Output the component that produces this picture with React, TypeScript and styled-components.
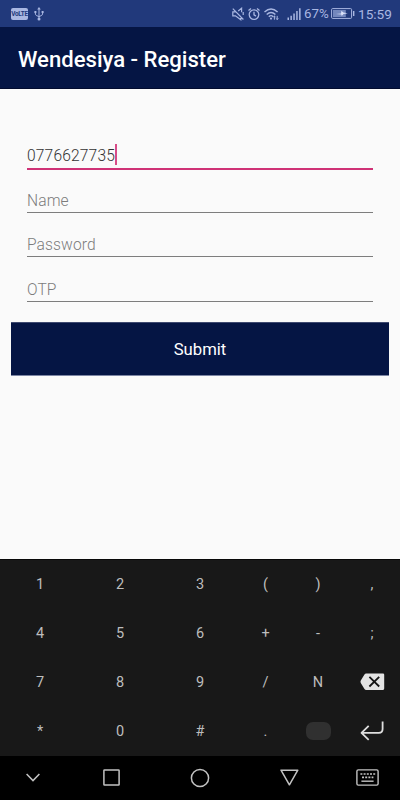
import React from "react";
import styled, { createGlobalStyle } from "styled-components";

const GlobalStyle = createGlobalStyle`
  *, *::before, *::after { box-sizing: border-box; }
  body { margin: 0; background: #fafafa; font-family: Roboto, "Noto Sans", sans-serif; }
  svg { display: block; flex: none; }
`;

const Screen = styled.div`
  display: flex;
  flex-direction: column;
  width: 400px;
  height: 800px;
  overflow: hidden;
  background: #fafafa;
`;

const StatusBar = styled.header`
  display: flex;
  align-items: center;
  justify-content: space-between;
  height: 27px;
  padding: 0 8px 0 11px;
  background: #21397b;
  color: #a9b7e2;
`;

const StatusGroup = styled.div<{ $gap?: number }>`
  display: flex;
  align-items: center;
  gap: ${({ $gap = 0 }) => $gap}px;
`;

const VolteBadge = styled.span`
  display: flex;
  align-items: center;
  justify-content: center;
  width: 17px;
  height: 12px;
  border-radius: 2px;
  background: #a9b7e2;
  color: #21397b;
  font-size: 6.4px;
  font-weight: 700;
  letter-spacing: -0.3px;
  line-height: 12px;
`;

const StatusText = styled.span<{ $width: number; $size: number }>`
  width: ${({ $width }) => $width}px;
  font-size: ${({ $size }) => $size}px;
  line-height: 26px;
  padding-top: 1px;
  white-space: nowrap;
`;

const SignalSlot = styled.span`
  padding-left: 8px;
`;

const AppBar = styled.div`
  display: flex;
  align-items: center;
  height: 62px;
  padding: 2px 18px 0;
  background: #051544;
  border-bottom: 1px solid #020b2e;
`;

const Title = styled.h1`
  margin: 0;
  color: #fff;
  font-size: 22.1px;
  font-weight: 500;
  line-height: 28px;
  white-space: nowrap;
`;

const Form = styled.main`
  flex: 1;
  display: flex;
  flex-direction: column;
  padding: 48px 11px 0;
`;

const Field = styled.div<{ $active?: boolean; $height: number }>`
  display: flex;
  align-items: flex-end;
  height: ${({ $height }) => $height}px;
  margin: 0 16px;
  padding-bottom: ${({ $active }) => ($active ? 2 : 1)}px;
  border-bottom: ${({ $active }) => ($active ? "2px solid #cf3276" : "1px solid #7d7d7d")};
`;

const FieldText = styled.span<{ $filled?: boolean }>`
  color: ${({ $filled }) => ($filled ? "#333" : "#7c7c7c")};
  font-size: 15.6px;
  font-weight: 300;
  letter-spacing: ${({ $filled }) => ($filled ? 0.15 : 0.1)}px;
  line-height: 20px;
`;

const Caret = styled.span`
  width: 2px;
  height: 21px;
  margin-bottom: 1px;
  background: #d84c88;
`;

const SubmitButton = styled.button`
  height: 54px;
  margin: 20px 0 0;
  padding: 1px 0 0;
  border: 0;
  border-top: 1px solid #3f4a70;
  border-bottom: 1px solid #7d86a4;
  background: #051544;
  color: #fff;
  font: 400 16.7px Roboto, sans-serif;
`;

const Keypad = styled.section`
  display: grid;
  grid-template-columns: 80px 80px 80px 51px 54px 54px;
  grid-template-rows: repeat(4, 49px);
  height: 197px;
  border-top: 1px solid #080808;
  background: #181818;
`;

const Key = styled.div`
  display: flex;
  align-items: center;
  justify-content: center;
  color: #bdbdbd;
  font-size: 14.5px;
`;

const SpaceKey = styled.span`
  width: 25px;
  height: 18px;
  margin-bottom: 1px;
  border-radius: 7px;
  background: #303030;
`;

const NavBar = styled.nav`
  display: grid;
  grid-template-columns: 66px 90px 88px 90px 66px;
  place-items: center;
  height: 44px;
  padding-bottom: 1px;
  background: #000;
  color: #c2c2c2;
`;

const UsbIcon = () => (
  <svg width="10" height="14" viewBox="0 0 10 14" fill="none" stroke="currentColor">
    <path d="M5 2v9M1.4 5v2.2Q1.4 8.6 5 9.6Q8.6 8.6 8.6 7V5" />
    <path d="M5 0 3.2 2.6h3.6z" fill="currentColor" stroke="none" />
    <circle cx="5" cy="12" r="1.5" fill="currentColor" stroke="none" />
    <path d="M.4 4h2v2h-2zM7.6 4h2v2h-2z" fill="currentColor" stroke="none" />
  </svg>
);

const MuteIcon = () => (
  <svg width="12" height="14" viewBox="0 0 12 14" fill="none" stroke="currentColor" strokeWidth="1.2">
    <path d="M9.6 5.2V1.2L6.2 4M4.2 4.8H.8v4h2.6l5.4 4V9.2M.8 1.7l10.6 10.8M11.2 5v3" />
  </svg>
);

const AlarmIcon = () => (
  <svg width="12" height="14" viewBox="0 0 12 14" fill="none" stroke="currentColor" strokeWidth="1.3">
    <circle cx="6" cy="7.6" r="4.8" />
    <path d="M6 4.8v3l2 1.3M.5 3.4 3 1.4M11.5 3.4 9 1.4" />
  </svg>
);

const WifiIcon = () => (
  <svg width="15" height="14" viewBox="0 0 15 14" fill="none" stroke="currentColor" strokeWidth="1.4">
    <path d="M.5 5Q7 -.9 13.6 5M2.7 7.4Q7 3.4 11.4 7.4M4.8 9.7Q7 7.5 9.2 9.7" />
    <circle cx="7" cy="11.6" r="1.1" fill="currentColor" stroke="none" />
    <path d="M10.4 8.9v3.8M13.2 8.9v3.8" strokeWidth="1" />
    <path d="m9.2 10.4 1.2-1.7 1.2 1.7M12 11.1l1.2 1.7 1.2-1.7" strokeWidth=".7" />
  </svg>
);

const SignalIcon = () => (
  <svg width="14" height="14" viewBox="0 0 14 14" fill="currentColor">
    <path d="M.5 10.5H2V13H.5zM3.4 8.8h1.5V13H3.4zM6.3 6.5h1.5V13H6.3zM9.2 4h1.5v9H9.2zM12.1 1.2h1.5V13h-1.5z" />
  </svg>
);

const BatteryIcon = () => (
  <svg width="24" height="11" viewBox="0 0 24 11">
    <rect x=".6" y=".6" width="20" height="9.8" rx="1" fill="none" stroke="currentColor" />
    <path d="M2 2h12.8v7H2z" fill="#7387bd" />
    <path d="m5 5.9 5-.3.4-2.8 2 1.8 4.4.7-4.3.8-1.7 2-.6-1.7z" fill="#dbe2fa" />
    <path d="M22 3h1.4v5H22z" fill="currentColor" />
  </svg>
);

const BackspaceIcon = () => (
  <svg width="25" height="20" viewBox="0 0 25 20">
    <path d="M6.3.4H23q1.2 0 1.2 1.2v14q0 1.3-1.2 1.3H6.3Q5 16.9 4.3 15.7L.8 9.9q-.7-1.2 0-2.4L4.3 1.7Q5 .4 6.3.4z" fill="#e4e4e4" />
    <path d="m9.4 3.9 9.8 9.6m0-9.6-9.8 9.6" stroke="#151515" strokeWidth="1.8" />
  </svg>
);

const EnterIcon = () => (
  <svg width="24" height="22" viewBox="0 0 24 22" fill="none" stroke="#dedede" strokeWidth="1.8" strokeLinejoin="round">
    <path d="M22.6.5v7.5q0 3.8-3.8 3.8H1.4M8.7 4.9l-7.2 6.9 7.2 7" />
  </svg>
);

const ChevronIcon = () => (
  <svg width="14" height="9" viewBox="0 0 14 9" fill="none" stroke="currentColor" strokeWidth="1.5">
    <path d="m.6 1 6.4 6.6L13.4 1" />
  </svg>
);

const RecentsIcon = () => (
  <svg width="17" height="17" viewBox="0 0 17 17" fill="none" stroke="currentColor" strokeWidth="1.5">
    <rect x=".9" y=".9" width="15.2" height="15.2" rx=".6" />
  </svg>
);

const HomeIcon = () => (
  <svg width="20" height="20" viewBox="0 0 20 20" fill="none" stroke="currentColor" strokeWidth="1.5">
    <circle cx="10" cy="10" r="8.6" />
  </svg>
);

const BackIcon = () => (
  <svg width="19" height="17" viewBox="0 0 19 17" fill="none" stroke="currentColor" strokeWidth="1.5" strokeLinejoin="round">
    <path d="M1 1.2h16.8L9.4 15.8z" />
  </svg>
);

const KeyboardIcon = () => (
  <svg width="23" height="17" viewBox="0 0 23 17" fill="none" stroke="currentColor" strokeWidth="1.4">
    <rect x=".9" y=".9" width="21.2" height="15.2" rx="1.4" />
    <path d="M4.4 5h14.8M6 8.4h11.4" strokeDasharray="2 1.2" strokeWidth="1.6" />
    <path d="M5.4 12.2h12.2" />
  </svg>
);

const keys: { id: string; face: React.ReactNode }[] = [
  ..."123(),456+-;789/N".split("").map((c) => ({ id: c, face: c })),
  { id: "backspace", face: <BackspaceIcon /> },
  ..."*0#.".split("").map((c) => ({ id: c, face: c })),
  { id: "space", face: <SpaceKey /> },
  { id: "enter", face: <EnterIcon /> },
];

const fields = [
  { label: "Name", height: 43 },
  { label: "Password", height: 44 },
  { label: "OTP", height: 45 },
];

export default function App() {
  return (
    <Screen>
      <GlobalStyle />
      <StatusBar>
        <StatusGroup $gap={6}>
          <VolteBadge>VoLTE</VolteBadge>
          <UsbIcon />
        </StatusGroup>
        <StatusGroup>
          <StatusGroup $gap={4}>
            <MuteIcon />
            <AlarmIcon />
            <WifiIcon />
          </StatusGroup>
          <StatusGroup $gap={3}>
            <SignalSlot>
              <SignalIcon />
            </SignalSlot>
            <StatusText $width={24} $size={13.3}>67%</StatusText>
            <BatteryIcon />
            <StatusText $width={34} $size={13.6}>15:59</StatusText>
          </StatusGroup>
        </StatusGroup>
      </StatusBar>
      <AppBar>
        <Title>Wendesiya - Register</Title>
      </AppBar>
      <Form>
        <Field $active $height={33}>
          <FieldText $filled>0776627735</FieldText>
          <Caret />
        </Field>
        {fields.map(({ label, height }) => (
          <Field key={label} $height={height}>
            <FieldText>{label}</FieldText>
          </Field>
        ))}
        <SubmitButton type="button">Submit</SubmitButton>
      </Form>
      <Keypad>
        {keys.map(({ id, face }) => (
          <Key key={id}>{face}</Key>
        ))}
      </Keypad>
      <NavBar>
        <ChevronIcon />
        <RecentsIcon />
        <HomeIcon />
        <BackIcon />
        <KeyboardIcon />
      </NavBar>
    </Screen>
  );
}
